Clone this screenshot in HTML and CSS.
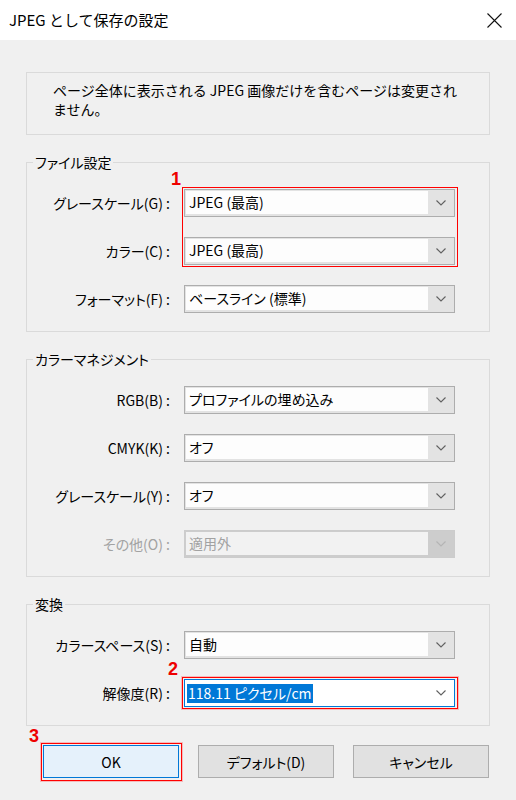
FILE: index.html
```html
<!DOCTYPE html>
<html lang="ja">
<head>
<meta charset="utf-8">
<title>JPEG として保存の設定</title>
<link rel="stylesheet" href="styles.css">
</head>
<body>
<div class="titlebar">
  <span class="title">JPEG として保存の設定</span>
  <svg class="close" width="15" height="15" viewBox="0 0 15 15"><path d="M0.5 0.5 L14.5 14.5 M14.5 0.5 L0.5 14.5" stroke="#111" stroke-width="1.1" fill="none"/></svg>
</div>
<main class="content">
  <div class="info">ページ全体に表示される JPEG 画像だけを含むページは変更され<br>ません。</div>

  <fieldset class="group">
    <legend>ファイル設定</legend>
    <div class="row">
      <span class="label">グレースケール(G) :</span>
      <div class="select"><span class="field">JPEG (最高)</span><span class="arrow"><svg width="10" height="6" viewBox="0 0 10 6"><polyline points="0.5,0.5 5,5 9.5,0.5" fill="none" stroke="#606060" stroke-width="1.1"/></svg></span></div>
    </div>
    <div class="row">
      <span class="label">カラー(C) :</span>
      <div class="select"><span class="field">JPEG (最高)</span><span class="arrow"><svg width="10" height="6" viewBox="0 0 10 6"><polyline points="0.5,0.5 5,5 9.5,0.5" fill="none" stroke="#606060" stroke-width="1.1"/></svg></span></div>
    </div>
    <div class="row">
      <span class="label">フォーマット(F) :</span>
      <div class="select"><span class="field">ベースライン (標準)</span><span class="arrow"><svg width="10" height="6" viewBox="0 0 10 6"><polyline points="0.5,0.5 5,5 9.5,0.5" fill="none" stroke="#606060" stroke-width="1.1"/></svg></span></div>
    </div>
  </fieldset>

  <fieldset class="group">
    <legend>カラーマネジメント</legend>
    <div class="row">
      <span class="label">RGB(B) :</span>
      <div class="select"><span class="field">プロファイルの埋め込み</span><span class="arrow"><svg width="10" height="6" viewBox="0 0 10 6"><polyline points="0.5,0.5 5,5 9.5,0.5" fill="none" stroke="#606060" stroke-width="1.1"/></svg></span></div>
    </div>
    <div class="row">
      <span class="label">CMYK(K) :</span>
      <div class="select"><span class="field">オフ</span><span class="arrow"><svg width="10" height="6" viewBox="0 0 10 6"><polyline points="0.5,0.5 5,5 9.5,0.5" fill="none" stroke="#606060" stroke-width="1.1"/></svg></span></div>
    </div>
    <div class="row">
      <span class="label">グレースケール(Y) :</span>
      <div class="select"><span class="field">オフ</span><span class="arrow"><svg width="10" height="6" viewBox="0 0 10 6"><polyline points="0.5,0.5 5,5 9.5,0.5" fill="none" stroke="#606060" stroke-width="1.1"/></svg></span></div>
    </div>
    <div class="row disabled">
      <span class="label">その他(O) :</span>
      <div class="select"><span class="field">適用外</span><span class="arrow"><svg width="10" height="6" viewBox="0 0 10 6"><polyline points="0.5,0.5 5,5 9.5,0.5" fill="none" stroke="#b4b4b4" stroke-width="1.1"/></svg></span></div>
    </div>
  </fieldset>

  <fieldset class="group">
    <legend>変換</legend>
    <div class="row">
      <span class="label">カラースペース(S) :</span>
      <div class="select"><span class="field">自動</span><span class="arrow"><svg width="10" height="6" viewBox="0 0 10 6"><polyline points="0.5,0.5 5,5 9.5,0.5" fill="none" stroke="#606060" stroke-width="1.1"/></svg></span></div>
    </div>
    <div class="row focused">
      <span class="label">解像度(R) :</span>
      <div class="select"><span class="field"><span class="sel">118.11 ピクセル/cm</span></span><span class="arrow"><svg width="10" height="6" viewBox="0 0 10 6"><polyline points="0.5,0.5 5,5 9.5,0.5" fill="none" stroke="#606060" stroke-width="1.1"/></svg></span></div>
    </div>
  </fieldset>

  <div class="buttons">
    <button class="btn primary">OK</button>
    <button class="btn">デフォルト(D)</button>
    <button class="btn">キャンセル</button>
  </div>
</main>

<div class="mark box1"></div>
<div class="mark box2"></div>
<div class="mark box3"></div>
<span class="num n1">1</span>
<span class="num n2">2</span>
<span class="num n3">3</span>
</body>
</html>
```

FILE: styles.css
```css
* { box-sizing: border-box; }

html, body {
  margin: 0;
  padding: 0;
}

body {
  position: relative;
  width: 516px;
  height: 800px;
  background: #f0f0f0;
  font-family: "Noto Sans CJK JP", "Noto Sans", sans-serif;
  font-size: 14px;
  color: #000;
  overflow: hidden;
}

.titlebar {
  height: 40px;
  background: #ffffff;
  display: flex;
  align-items: center;
  justify-content: space-between;
  padding: 0 14px 0 9px;
}

.title {
  font-size: 15px;
  line-height: 20px;
  color: #000;
}

.close { display: block; }

.content {
  padding: 0 26px;
}

.info {
  margin-top: 32px;
  height: 63px;
  border: 1px solid #dadada;
  padding: 8px 0 0 26px;
  line-height: 19px;
  white-space: nowrap;
}

.group {
  margin: 18px 0 0 0;
  padding: 18px 0 18px 0;
  border: 1px solid #dadada;
  min-inline-size: 0;
  display: flex;
  flex-direction: column;
  gap: 20px;
}

.group legend {
  margin-left: 6px;
  padding: 0 2px;
  line-height: 18px;
  height: 18px;
  font-feature-settings: "palt";
}

.row {
  display: grid;
  grid-template-columns: 143px 271px;
  column-gap: 14px;
  align-items: center;
}

.label {
  text-align: right;
  white-space: nowrap;
  line-height: 18px;
  font-feature-settings: "palt";
}

.select {
  height: 28px;
  border: 1px solid #adadad;
  background: #e3e3e3;
  display: flex;
}

.field {
  flex: 1;
  margin: 1px 0 2px 1px;
  background: #fdfdfd;
  padding-left: 3px;
  line-height: 23px;
  white-space: nowrap;
  font-feature-settings: "palt";
}

.arrow {
  width: 26px;
  display: flex;
  align-items: center;
  justify-content: center;
}

.arrow svg { display: block; }

.disabled .label { color: #a2a2a2; }
.disabled .select {
  border-color: #cccccc;
  background: #cdcdcd;
}
.disabled .field {
  background: #f2f2f2;
  color: #a2a2a2;
}

.focused .select {
  border-color: #0078d7;
  background: #ffffff;
}
.focused .field {
  background: #ffffff;
  margin: 0;
  padding-left: 2px;
  line-height: 26px;
}
.sel {
  display: inline-block;
  background: #0078d7;
  color: #ffffff;
  line-height: 19px;
  padding: 0 1px;
}

.buttons {
  margin-top: 19px;
  margin-left: 17px;
  display: flex;
  gap: 19px;
}

.btn {
  width: 136px;
  height: 33px;
  border: 1px solid #adadad;
  background: #e1e1e1;
  font-family: "Noto Sans CJK JP", "Noto Sans", sans-serif;
  font-size: 14px;
  color: #000;
  padding: 0;
  font-feature-settings: "palt";
}

.btn.primary {
  background: #e5f1fb;
  border-color: #0078d7;
}

.mark {
  position: absolute;
  border: 1px solid #ff0000;
}
.box1 { left: 182px; top: 187px; width: 276px; height: 80px; }
.box2 { left: 182px; top: 677px; width: 276px; height: 32px; box-shadow: 0 0 0 1px rgba(255, 90, 90, 0.35); }
.box3 { left: 41px; top: 743px; width: 141px; height: 38px; box-shadow: 0 0 0 1px rgba(255, 90, 90, 0.35); }

.num {
  position: absolute;
  font-family: "Liberation Sans", Arial, sans-serif;
  font-weight: bold;
  font-size: 18px;
  line-height: 18px;
  color: #ee0000;
}
.n1 { left: 171px; top: 170px; }
.n2 { left: 168px; top: 660px; }
.n3 { left: 29px; top: 727px; }
```
